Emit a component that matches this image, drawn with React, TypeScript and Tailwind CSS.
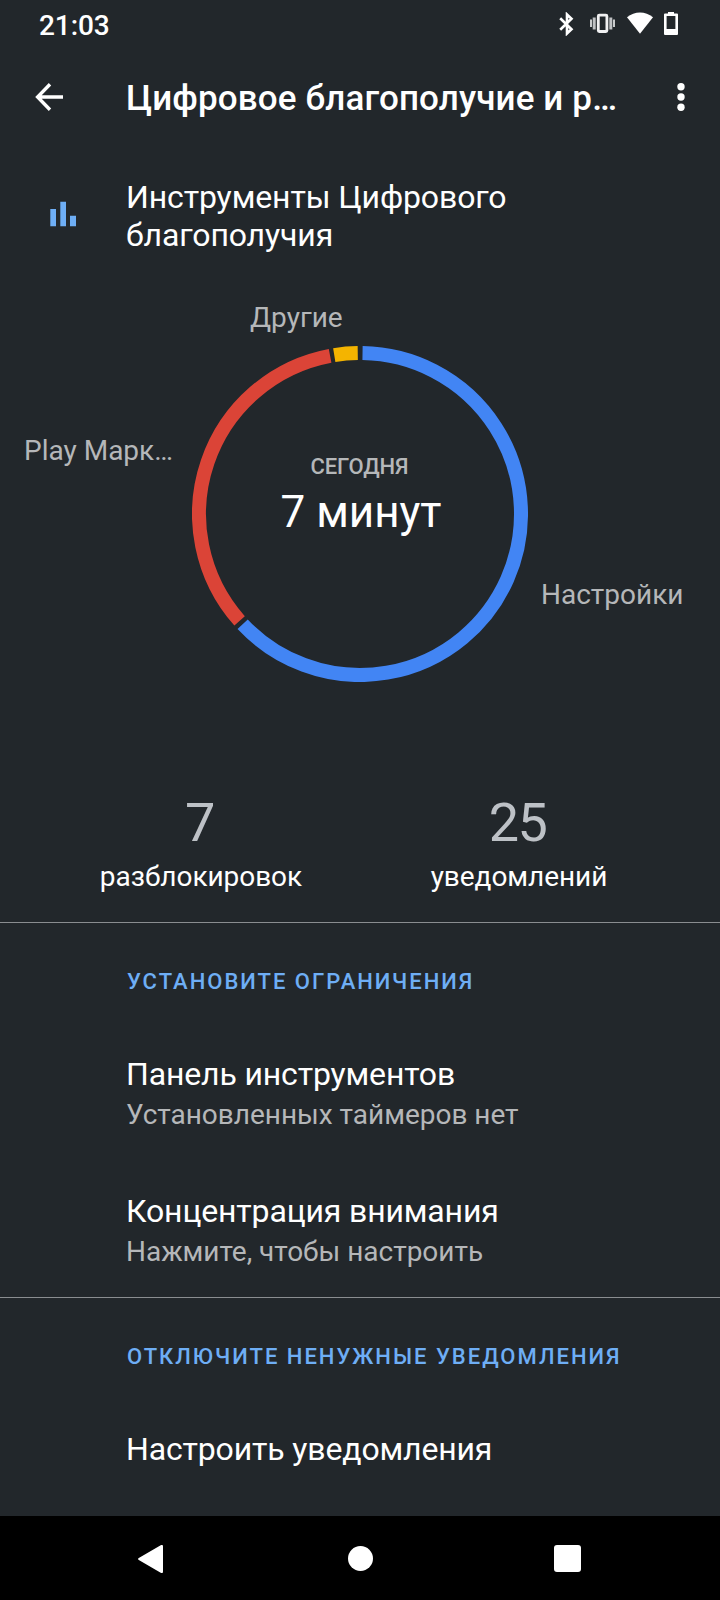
import React from 'react';

const slices = [
  { name: 'settings', color: '#4285f4', from: 0.9, to: 226.8 },
  { name: 'play', color: '#db4437', from: 228.4, to: 349.3 },
  { name: 'other', color: '#f4b400', from: 350.8, to: 359.2 },
];

const point = (deg: number, r: number) => {
  const a = ((deg - 90) * Math.PI) / 180;
  return `${168 + r * Math.cos(a)} ${168 + r * Math.sin(a)}`;
};

const StatusBar = () => (
  <div className="h-[50px] flex items-start justify-between pl-[39px] pr-[42px]">
    <span className="mt-[10px] text-[28px] leading-8 tracking-[-0.1px] font-medium text-white">21:03</span>
    <div className="flex mt-3 h-6">
      <svg className="w-[15px] h-6" viewBox="0 0 15 24" fill="none" stroke="#fff" strokeWidth="2.6">
        <path d="M1.2 6.2l11.3 11-4.5 4.3V2.500l4.500 4.300-11.300 11" />
      </svg>
      <svg className="w-[25px] h-6 ml-4" viewBox="0 0 25 24" fill="none" stroke="#f1f1f2">
        <rect x="8.3" y="3.2" width="8.6" height="16.3" rx="1" strokeWidth="2.8" />
        <path d="M1 7.5v7.500M24 7.500v7.500" strokeWidth="2" stroke="#c9cbcc" />
        <path d="M4.2 5.5v12M20.8 5.5v12" strokeWidth="3" stroke="#c0c2c4" />
      </svg>
      <svg className="w-[26px] h-6 ml-3" viewBox="0 0 26 24" fill="#fff">
        <path d="M0 5.2C7.500-1.100 18.500-1.100 26 5.200L13 21.700z" />
      </svg>
      <svg className="w-[14px] h-6 ml-[11px]" viewBox="0 0 14 24" fill="#fff">
        <path fillRule="evenodd" d="M4 0h6v1.500h3a1 1 0 0 1 1 1V22a1 1 0 0 1-1 1H1a1 1 0 0 1-1-1V2.500a1 1 0 0 1 1-1h3zM2.600 4V17h8.800V4z" />
      </svg>
    </div>
  </div>
);

const AppBar = () => (
  <header className="h-[98px] flex items-center px-[35px] text-white">
    <svg className="w-7 h-7 -mt-1" viewBox="0 0 28 28" fill="none" stroke="#fff" strokeWidth="3.4">
      <path d="M15 1.300L2.600 14 15 26.700M2.600 14H28" />
    </svg>
    <h1 className="flex-1 ml-[63px] text-[35px] leading-10 tracking-[0.13px] font-medium">Цифровое благополучие и р…</h1>
    <svg className="w-2 h-7 -mt-1" viewBox="0 0 8 28" fill="#fff">
      <circle cx="4" cy="3.7" r="3.7" />
      <circle cx="4" cy="14" r="3.7" />
      <circle cx="4" cy="24.3" r="3.7" />
    </svg>
  </header>
);

const UsageChart = () => (
  <div className="relative w-[336px] h-[336px] mx-auto">
    <svg className="w-full h-full" viewBox="0 0 336 336" fill="none" strokeWidth="14">
      {slices.map((s) => (
        <path
          key={s.name}
          d={`M${point(s.from, 161)} A161 161 0 ${s.to - s.from > 180 ? 1 : 0} 1 ${point(s.to, 161)}`}
          stroke={s.color}
        />
      ))}
    </svg>
    <div className="absolute inset-x-0 top-[107px] text-center">
      <p className="text-[22px] leading-7 font-medium tracking-[-0.1px] pr-px text-[#b5b7b9]">СЕГОДНЯ</p>
      <p className="text-[44px] leading-[52px] mt-[5px] pl-[2px] text-white">7 минут</p>
    </div>
    <span className="absolute left-[58px] -top-[44px] text-[28px] leading-8 text-[#b5b7b9]">Другие</span>
    <span className="absolute -left-[168px] top-[89px] whitespace-nowrap text-[28px] leading-8 text-[#b5b7b9]">Play Марк…</span>
    <span className="absolute left-[349px] top-[233px] text-[28px] leading-8 text-[#b5b7b9]">Настройки</span>
  </div>
);

const Stat = ({ value, label }: { value: string; label: string }) => (
  <div className="w-[318px] text-center">
    <p className="text-[54px] leading-[64px] tracking-[-1.5px] pr-[3px] text-[#bdc1c6]">{value}</p>
    <p className="text-[28px] leading-8 tracking-[-0.05px] mt-[6px] text-white">{label}</p>
  </div>
);

const Heading = ({ children }: { children: React.ReactNode }) => (
  <h2 className="h-[116px] pl-[127px] pt-[45px] text-[22px] leading-7 font-medium tracking-[2px] text-[#6eaef5]">{children}</h2>
);

const Row = ({ title, sub }: { title: string; sub?: string }) => (
  <div className="h-[137px] pl-[126px] pt-4">
    <p className="text-[32px] leading-[38px] tracking-[-0.15px] text-white">{title}</p>
    {sub && <p className="text-[28px] leading-[33px] tracking-[-0.02px] mt-[5px] text-[#b5b7b9]">{sub}</p>}
  </div>
);

const NavBar = () => (
  <nav className="h-[84px] shrink-0 bg-black flex items-center pl-[138px] pt-px">
    <svg className="w-[25px] h-7" viewBox="0 0 25 28" fill="#fff">
      <path d="M.8 12.900L22.700.2Q25-.8 25 1.500v25q0 2.300-2.300 1.300L.8 15.100q-1.500-1.100 0-2.200z" />
    </svg>
    <div className="w-[25px] h-[25px] ml-[185px] rounded-full bg-white" />
    <div className="w-[27px] h-[27px] ml-[181px] rounded-[3px] bg-white" />
  </nav>
);

export default function App() {
  return (
    <div className="w-[720px] h-[1600px] bg-[#22272b] font-[Roboto,sans-serif] flex flex-col overflow-hidden">
      <StatusBar />
      <AppBar />
      <section className="h-[198px] flex pt-[30px] pl-[50px]">
        <svg className="w-[26px] h-[26px] mt-[23px]" viewBox="0 0 26 26" fill="#6eaef5">
          <path d="M.3 8H6v17.300H.3zM10.300.7H16v24.600h-5.700zM20 14.700h6v10.600h-6z" />
        </svg>
        <p className="ml-[50px] text-[32px] leading-[38px] tracking-[-0.12px] text-white">
          Инструменты Цифрового
          <br />
          благополучия
        </p>
      </section>
      <UsageChart />
      <section className="h-[241px] shrink-0 flex pl-[42px] pt-[109px] border-b border-[#8a8d90]">
        <Stat value="7" label="разблокировок" />
        <Stat value="25" label="уведомлений" />
      </section>
      <section className="h-[375px] shrink-0 border-b border-[#8a8d90]">
        <Heading>УСТАНОВИТЕ ОГРАНИЧЕНИЯ</Heading>
        <Row title="Панель инструментов" sub="Установленных таймеров нет" />
        <Row title="Концентрация внимания" sub="Нажмите, чтобы настроить" />
      </section>
      <section className="flex-1 min-h-0 overflow-hidden">
        <Heading>ОТКЛЮЧИТЕ НЕНУЖНЫЕ УВЕДОМЛЕНИЯ</Heading>
        <Row title="Настроить уведомления" />
      </section>
      <NavBar />
    </div>
  );
}
